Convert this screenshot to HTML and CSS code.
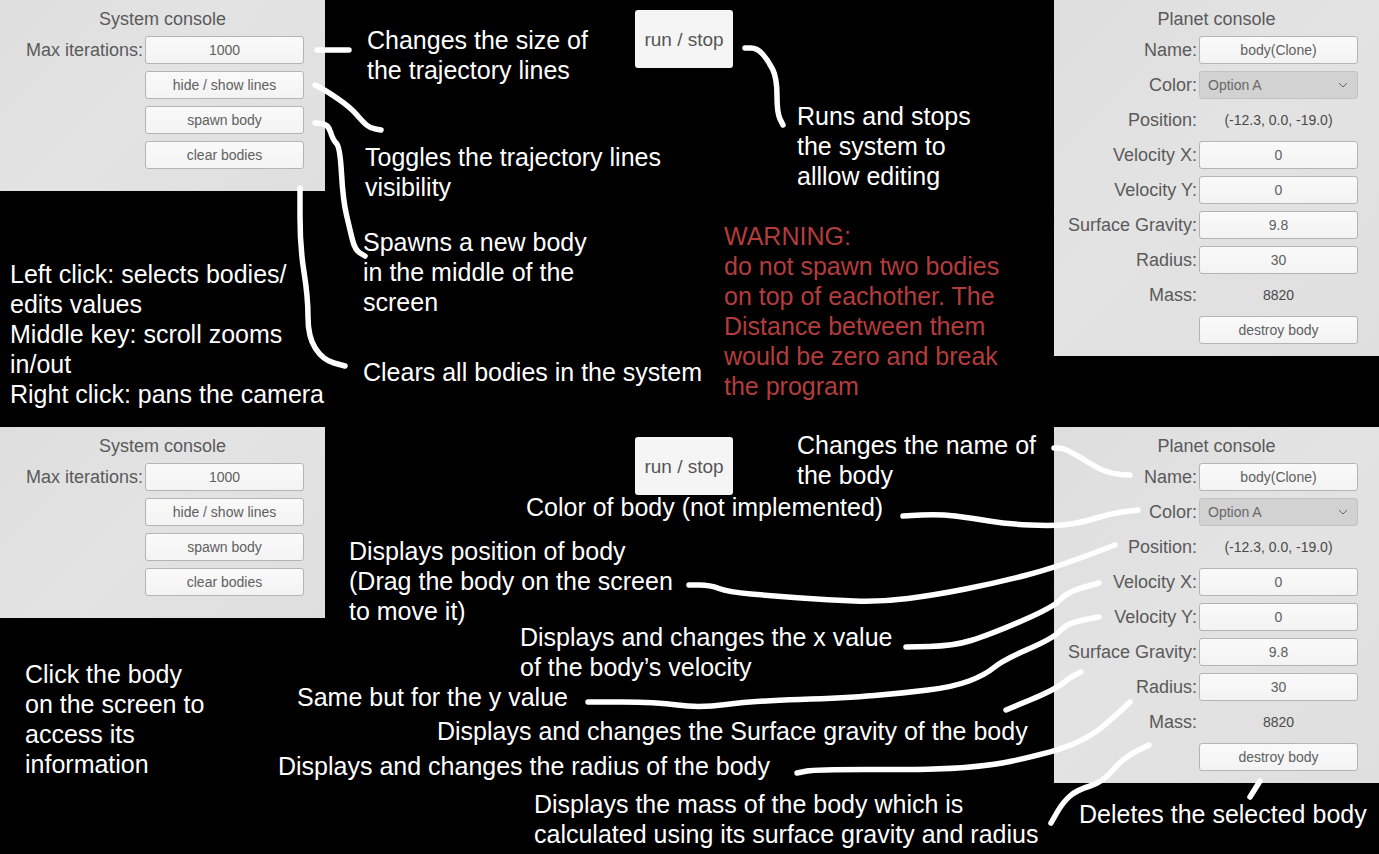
FILE: index.html
```html
<!DOCTYPE html>
<html lang="en">
<head>
  <meta charset="UTF-8">
  <title>Controls</title>
  <link rel="stylesheet" href="styles.css">
</head>
<body>
  <div class="stage">

    <!-- top half -->
    <section class="console system-console top-row">
      <h2>System console</h2>
      <span class="label">Max iterations:</span><div class="field">1000</div>
      <div class="field slot">hide / show lines</div>
      <div class="field slot">spawn body</div>
      <div class="field slot">clear bodies</div>
    </section>

    <div class="run-button run-top">run / stop</div>

    <section class="console planet-console top-row">
      <h2>Planet console</h2>
      <span class="label">Name:</span><div class="field">body(Clone)</div>
      <span class="label">Color:</span>
      <div class="field dropdown">Option A
        <svg class="chevron" width="10" height="6" viewBox="0 0 10 6"><path d="M1 1l4 4 4-4" fill="none" stroke="#666" stroke-width="1"/></svg>
      </div>
      <span class="label">Position:</span><div class="value">(-12.3, 0.0, -19.0)</div>
      <span class="label">Velocity X:</span><div class="field">0</div>
      <span class="label">Velocity Y:</span><div class="field">0</div>
      <span class="label">Surface Gravity:</span><div class="field">9.8</div>
      <span class="label">Radius:</span><div class="field">30</div>
      <span class="label">Mass:</span><div class="value">8820</div>
      <div class="field slot">destroy body</div>
    </section>

    <p class="note note-size">Changes the size of<br>the trajectory lines</p>
    <p class="note note-toggle">Toggles the trajectory lines<br>visibility</p>
    <p class="note note-spawn">Spawns a new body<br>in the middle of the<br>screen</p>
    <p class="note note-clear">Clears all bodies in the system</p>
    <p class="note note-mouse">Left click: selects bodies/<br>edits values<br>Middle key: scroll zooms<br>in/out<br>Right click: pans the camera</p>
    <p class="note note-run">Runs and stops<br>the system to<br>alllow editing</p>
    <p class="note note-warning">WARNING:<br>do not spawn two bodies<br>on top of eachother. The<br>Distance between them<br>would be zero and break<br>the program</p>

    <!-- bottom half -->
    <section class="console system-console bottom-row">
      <h2>System console</h2>
      <span class="label">Max iterations:</span><div class="field">1000</div>
      <div class="field slot">hide / show lines</div>
      <div class="field slot">spawn body</div>
      <div class="field slot">clear bodies</div>
    </section>

    <div class="run-button run-bottom">run / stop</div>

    <section class="console planet-console bottom-row">
      <h2>Planet console</h2>
      <span class="label">Name:</span><div class="field">body(Clone)</div>
      <span class="label">Color:</span>
      <div class="field dropdown">Option A
        <svg class="chevron" width="10" height="6" viewBox="0 0 10 6"><path d="M1 1l4 4 4-4" fill="none" stroke="#666" stroke-width="1"/></svg>
      </div>
      <span class="label">Position:</span><div class="value">(-12.3, 0.0, -19.0)</div>
      <span class="label">Velocity X:</span><div class="field">0</div>
      <span class="label">Velocity Y:</span><div class="field">0</div>
      <span class="label">Surface Gravity:</span><div class="field">9.8</div>
      <span class="label">Radius:</span><div class="field">30</div>
      <span class="label">Mass:</span><div class="value">8820</div>
      <div class="field slot">destroy body</div>
    </section>

    <p class="note note-name">Changes the name of<br>the body</p>
    <p class="note note-color">Color of body (not implemented)</p>
    <p class="note note-position">Displays position of body<br>(Drag the body on the screen<br>to move it)</p>
    <p class="note note-velx">Displays and changes the x value<br>of the body’s velocity</p>
    <p class="note note-vely">Same but for the y value</p>
    <p class="note note-gravity">Displays and changes the Surface gravity of the body</p>
    <p class="note note-radius">Displays and changes the radius of the body</p>
    <p class="note note-mass">Displays the mass of the body which is<br>calculated using its surface gravity and radius</p>
    <p class="note note-delete">Deletes the selected body</p>
    <p class="note note-click">Click the body<br>on the screen to<br>access its<br>information</p>

    <!-- hand drawn lines -->
    <svg class="scribbles" width="1379" height="854" viewBox="0 0 1379 854">
      <path d="M317 50H349"/>
      <path d="M315 85L320 87.5Q325 90 337.5 98.5Q350 107 356.5 114.5Q363 122 366.5 125Q370 128 375.5 129L381 130"/>
      <path d="M315 123L321.5 123.5Q328 124 330.5 132Q333 140 336.5 143.5Q340 147 341.5 173.5Q343 200 346.5 215Q350 230 352.5 240Q355 250 360 253L365 256"/>
      <path d="M300 188L300 217.5Q300 247 304 272Q308 297 308 317Q308 337 315.5 348.5Q323 360 334 363L345 366"/>
      <path d="M745 48L751 48Q757 48 762.5 54Q768 60 772.5 69Q777 78 777 95.5Q777 113 780 119L783 125"/>
      <path d="M1054 448L1058.5 448Q1063 448 1071.5 452.5Q1080 457 1088.5 462.5Q1097 468 1105 471Q1113 474 1121.5 474.5L1130 475"/>
      <path d="M903 516L921 515Q939 514 955 516Q971 518 989 521Q1007 524 1030 525Q1053 526 1066.5 524.5Q1080 523 1096.5 518Q1113 513 1125.5 511.5L1138 510"/>
      <path d="M689 585L699.5 585Q710 585 719 588.5Q728 592 751 594Q774 596 801 598Q828 600 854.5 601Q881 602 908 598.5Q935 595 965.5 589Q996 583 1025 575.5Q1054 568 1084.5 556.5L1115 545"/>
      <path d="M906 647L929.5 646.5Q953 646 971 640.5Q989 635 1021.5 621Q1054 607 1060.5 599.5Q1067 592 1083 587.5L1099 583"/>
      <path d="M588 702L622 702Q656 702 677.5 705Q699 708 726 704.5Q753 701 799.5 699.5Q846 698 874.5 695.5Q903 693 928 690Q953 687 969 681Q985 675 994 667.5Q1003 660 1028.5 649Q1054 638 1060.5 630.5Q1067 623 1083 620L1099 617"/>
      <path d="M1006 710L1030 700Q1054 690 1062.5 683.5Q1071 677 1076 674.5L1081 672"/>
      <path d="M797 773L807 771Q817 769 894 769.5Q971 770 1012.5 761Q1054 752 1072 744.5Q1090 737 1101.5 727.5Q1113 718 1121.5 710L1130 702"/>
      <path d="M1051 823L1057 812.5Q1063 802 1070 796Q1077 790 1090 786Q1103 782 1113 770Q1123 758 1136 751.5L1149 745"/>
      <path d="M1250 797L1260 781"/>
    </svg>
  </div>
</body>
</html>
```

FILE: styles.css
```css
html, body {
  margin: 0;
  background-color: #000;
}

body {
  font-family: "Liberation Sans", Arial, sans-serif;
  overflow: hidden;
}

.stage {
  position: relative;
  width: 1379px;
  height: 854px;
  overflow: hidden;
}

/* consoles */
.console {
  position: absolute;
  box-sizing: border-box;
  width: 325px;
  padding: 9px 21px 0 0;
  display: grid;
  grid-template-columns: 143px 159px;
  column-gap: 2px;
  row-gap: 7px;
  justify-content: end;
  align-content: start;
  align-items: center;
  background: linear-gradient(135deg, #dedede, #e3e3e3 45%, #dfdfdf);
  color: #5a5a5a;
}

.system-console {
  left: 0;
  height: 191px;
}

.planet-console {
  left: 1054px;
  height: 356px;
}

.top-row {
  top: 0;
}

.bottom-row {
  top: 427px;
}

.console h2 {
  grid-column: 1 / -1;
  margin: 0;
  height: 20px;
  line-height: 20px;
  font-size: 18px;
  font-weight: normal;
  text-align: center;
  justify-self: start;
  width: 325px;
}

.label {
  font-size: 18px;
  text-align: right;
}

.field {
  box-sizing: border-box;
  height: 28px;
  line-height: 26px;
  border: 1px solid #b4b4b4;
  border-radius: 3px;
  background: linear-gradient(#fafafa, #f3f3f3);
  font-size: 14px;
  text-align: center;
  color: #606060;
}

.slot {
  grid-column: 2;
}

.dropdown {
  display: flex;
  justify-content: space-between;
  align-items: center;
  padding: 0 9px 0 8px;
  background: #d2d2d2;
  border-color: #c2c2c2;
  color: #686868;
}

.value {
  height: 28px;
  line-height: 28px;
  font-size: 14px;
  text-align: center;
  color: #4a4a4a;
}

.run-button {
  position: absolute;
  left: 635px;
  box-sizing: border-box;
  width: 98px;
  height: 58px;
  line-height: 60px;
  border-radius: 3px;
  background: #f5f5f5;
  font-size: 19px;
  text-align: center;
  color: #555;
}

.run-top {
  top: 10px;
}

.run-bottom {
  top: 437px;
}

/* annotations */
.note {
  position: absolute;
  margin: 0;
  font-size: 25px;
  line-height: 30px;
  color: #fff;
  white-space: nowrap;
}

.note-size { left: 367px; top: 25px; }
.note-toggle { left: 365px; top: 142px; }
.note-spawn { left: 363px; top: 227px; }
.note-clear { left: 363px; top: 357px; }
.note-mouse { left: 10px; top: 259px; }
.note-run { left: 797px; top: 101px; }
.note-warning { left: 724px; top: 221px; color: #b43c3c; }
.note-name { left: 797px; top: 430px; }
.note-color { left: 526px; top: 492px; }
.note-position { left: 349px; top: 536px; }
.note-velx { left: 520px; top: 622px; }
.note-vely { left: 297px; top: 682px; }
.note-gravity { left: 437px; top: 716px; }
.note-radius { left: 278px; top: 751px; }
.note-mass { left: 534px; top: 789px; }
.note-delete { left: 1079px; top: 799px; }
.note-click { left: 25px; top: 659px; }

.scribbles {
  position: absolute;
  left: 0;
  top: 0;
  pointer-events: none;
}

.scribbles path {
  fill: none;
  stroke: #fff;
  stroke-width: 5.5;
  stroke-linecap: round;
  stroke-linejoin: round;
}
```
